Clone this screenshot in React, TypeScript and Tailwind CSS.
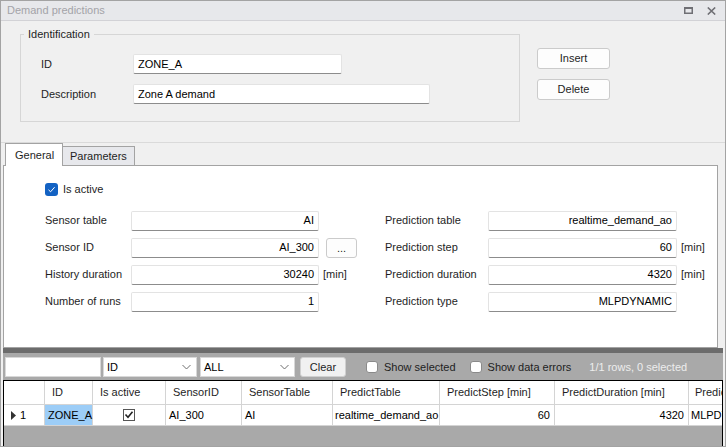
import React from 'react';

const Field = ({ value, w, right }: { value: string; w: string; right?: boolean }) => (
    <div
        className={`${w} h-[20px] bg-white border border-[#e3e3e3] border-b-[#8c8c8c] rounded-[2px] flex items-center px-[4px] text-black ${right ? 'justify-end' : ''}`}
    >
        {value}
    </div>
);

const Check = () => (
    <div className="w-[13px] h-[13px] rounded-[3px] bg-[#1362c3] flex items-center justify-center">
        <svg width="9" height="9" viewBox="0 0 9 9">
            <path d="M1.5 4.8 L3.6 6.8 L7.6 2.2" fill="none" stroke="#fff" strokeWidth="1" />
        </svg>
    </div>
);

const Box = () => <div className="w-[12px] h-[12px] rounded-[3px] bg-white border border-[#8a8a8a]" />;

const Chevron = () => (
    <svg width="9" height="6" viewBox="0 0 9 6">
        <path d="M0.5 1 L4.5 5 L8.5 1" fill="none" stroke="#6e6e6e" strokeWidth="1" />
    </svg>
);

const cols = [
    { name: 'ID', w: 'w-[48px]' },
    { name: 'Is active', w: 'w-[73px]' },
    { name: 'SensorID', w: 'w-[76px]' },
    { name: 'SensorTable', w: 'w-[91px]' },
    { name: 'PredictTable', w: 'w-[107px]' },
    { name: 'PredictStep [min]', w: 'w-[115px]' },
    { name: 'PredictDuration [min]', w: 'w-[134px]' },
];

export default function App() {
    return (
        <div className="w-[726px] h-[447px] overflow-hidden bg-[#f0f0f0] border border-[#a3a3a3] font-['Liberation_Sans',Arial,sans-serif] text-[11px] text-[#1e1e1e] flex flex-col">
            {/* Title bar */}
            <div className="h-[20px] shrink-0 bg-[#e7e8eb] border-b border-[#d2d2d6] flex items-center pl-[6px] pr-[9px]">
                <span className="text-[#a3a3a8] text-[11px]">Demand predictions</span>
                <div className="ml-auto flex items-center gap-[14px]">
                    <svg width="9" height="7" viewBox="0 0 9 7">
                        <rect x="0.75" y="1" width="7.5" height="5.25" fill="none" stroke="#6f6f74" strokeWidth="1.5" />
                        <rect x="0" y="0" width="9" height="2" fill="#6f6f74" />
                    </svg>
                    <svg width="9" height="8" viewBox="0 0 9 8">
                        <path d="M0.8 0.5 L8.2 7.5 M8.2 0.5 L0.8 7.5" stroke="#6f6f74" strokeWidth="1.6" />
                    </svg>
                </div>
            </div>

            {/* Identification */}
            <div className="h-[122px] shrink-0 border-b border-[#dadada] flex">
                <fieldset className="ml-[19px] mt-[6px] w-[500px] h-[95px] border border-[#d6d6d6] pt-[13px]">
                    <legend className="ml-[3px] px-[4px] leading-[14px]">Identification</legend>
                    <div className="pl-[20px] flex flex-col gap-[10px]">
                        <div className="flex items-center">
                            <span className="w-[92px]">ID</span>
                            <Field value="ZONE_A" w="w-[209px]" />
                        </div>
                        <div className="flex items-center">
                            <span className="w-[92px]">Description</span>
                            <Field value="Zone A demand" w="w-[297px]" />
                        </div>
                    </div>
                </fieldset>
                <div className="ml-[17px] mt-[27px] flex flex-col gap-[10px]">
                    <button className="w-[73px] h-[21px] bg-[#fdfdfd] border border-[#cbcbcb] rounded-[3px] text-[#1e1e1e]">Insert</button>
                    <button className="w-[73px] h-[21px] bg-[#fdfdfd] border border-[#cbcbcb] rounded-[3px] text-[#1e1e1e]">Delete</button>
                </div>
            </div>

            {/* Tabs */}
            <div className="ml-[2px] w-[715px] shrink-0">
                <div className="relative z-10 h-[22px] flex items-end pl-[2px]">
                    <div className="w-[58px] h-[23px] -mb-px bg-white border border-b-0 border-[#a3a3a3] flex items-center pl-[9px]">General</div>
                    <div className="w-[72px] h-[19px] bg-[#e7e8ec] border border-b-0 border-l-0 border-[#a3a3a3] flex items-center pl-[7px]">Parameters</div>
                </div>
                <div className="h-[183px] bg-white border border-[#a3a3a3] pt-[15px] pl-[41px]">
                    <div className="flex items-center gap-[5px]">
                        <Check />
                        <span>Is active</span>
                    </div>
                    <div className="mt-[13px] flex flex-col gap-[7px]">
                        {[
                            ['Sensor table', 'AI', '', 'Prediction table', 'realtime_demand_ao', ''],
                            ['Sensor ID', 'AI_300', 'btn', 'Prediction step', '60', '[min]'],
                            ['History duration', '30240', '[min]', 'Prediction duration', '4320', '[min]'],
                            ['Number of runs', '1', '', 'Prediction type', 'MLPDYNAMIC', ''],
                        ].map((r) => (
                            <div key={r[0]} className="flex items-center h-[20px]">
                                <div className="w-[340px] flex items-center">
                                    <span className="w-[86px]">{r[0]}</span>
                                    <Field value={r[1]} w="w-[188px]" right />
                                    {r[2] === 'btn' && (
                                        <button className="ml-[7px] w-[31px] h-[20px] bg-[#fdfdfd] border border-[#cbcbcb] rounded-[3px] leading-[12px]">...</button>
                                    )}
                                    {r[2] === '[min]' && <span className="ml-[4px]">[min]</span>}
                                </div>
                                <span className="w-[103px]">{r[3]}</span>
                                <Field value={r[4]} w="w-[189px]" right />
                                {r[5] && <span className="ml-[4px]">[min]</span>}
                            </div>
                        ))}
                    </div>
                </div>
            </div>

            {/* Bottom grid */}
            <div className="ml-[2px] w-[720px] flex-1 flex flex-col bg-[#a9a9a9]">
                <div className="h-[5px] shrink-0 bg-[#6c6c6c]" />
                <div className="h-[27px] shrink-0 flex items-center pl-[2px] pt-[1px]">
                    <div className="w-[96px] h-[20px] bg-white border border-[#d8d8d8]" />
                    <div className="ml-[2px] w-[94px] h-[20px] bg-white border border-[#d8d8d8] flex items-center justify-between pl-[3px] pr-[5px] text-black">
                        ID <Chevron />
                    </div>
                    <div className="ml-[3px] w-[95px] h-[20px] bg-white border border-[#d8d8d8] flex items-center justify-between pl-[3px] pr-[5px] text-black">
                        ALL <Chevron />
                    </div>
                    <button className="ml-[5px] w-[46px] h-[20px] bg-[#f1f1f1] border border-[#d0d0d0] rounded-[3px]">Clear</button>
                    <div className="ml-[20px] flex items-center gap-[6px]">
                        <Box />
                        <span>Show selected</span>
                    </div>
                    <div className="ml-[14px] flex items-center gap-[6px]">
                        <Box />
                        <span>Show data errors</span>
                    </div>
                    <span className="ml-[18px] text-[#ededed]">1/1 rows, 0 selected</span>
                </div>
                <div className="flex-1 border-t border-l border-r border-black overflow-hidden">
                    <div className="flex h-[24px] bg-white border-b border-[#d4d4d4]">
                        <div className="w-[41px] shrink-0 border-r border-[#d4d4d4]" />
                        {cols.map((c) => (
                            <div key={c.name} className={`${c.w} shrink-0 border-r border-[#d4d4d4] flex items-center pl-[7px] whitespace-nowrap`}>
                                {c.name}
                            </div>
                        ))}
                        <div className="flex-1 min-w-0 flex items-center pl-[6px] whitespace-nowrap overflow-hidden">Predic</div>
                    </div>
                    <div className="flex h-[21px] bg-white border-b border-[#d4d4d4] text-black">
                        <div className="w-[41px] shrink-0 border-r border-[#d4d4d4] flex items-center pl-[7px] gap-[4px]">
                            <svg width="5" height="9" viewBox="0 0 5 9">
                                <path d="M0 0 L5 4.5 L0 9 Z" fill="#333" />
                            </svg>
                            1
                        </div>
                        <div className="w-[48px] shrink-0 border-r border-[#d4d4d4] bg-[#9ccdf7] flex items-center pl-[3px]">ZONE_A</div>
                        <div className="w-[73px] shrink-0 border-r border-[#d4d4d4] flex items-center justify-center">
                            <svg width="12" height="12" viewBox="0 0 12 12">
                                <rect x="0.5" y="0.5" width="11" height="11" fill="#fff" stroke="#555" />
                                <path d="M2.5 5.5 L5 8.2 L9.5 2.8" fill="none" stroke="#222" strokeWidth="1.6" />
                            </svg>
                        </div>
                        <div className="w-[76px] shrink-0 border-r border-[#d4d4d4] flex items-center pl-[3px]">AI_300</div>
                        <div className="w-[91px] shrink-0 border-r border-[#d4d4d4] flex items-center pl-[3px]">AI</div>
                        <div className="w-[107px] shrink-0 border-r border-[#d4d4d4] flex items-center pl-[2px] whitespace-nowrap">realtime_demand_ao</div>
                        <div className="w-[115px] shrink-0 border-r border-[#d4d4d4] flex items-center justify-end pr-[4px]">60</div>
                        <div className="w-[134px] shrink-0 border-r border-[#d4d4d4] flex items-center justify-end pr-[4px]">4320</div>
                        <div className="flex-1 min-w-0 flex items-center pl-[2px] whitespace-nowrap overflow-hidden">MLPDY</div>
                    </div>
                </div>
            </div>
        </div>
    );
}
